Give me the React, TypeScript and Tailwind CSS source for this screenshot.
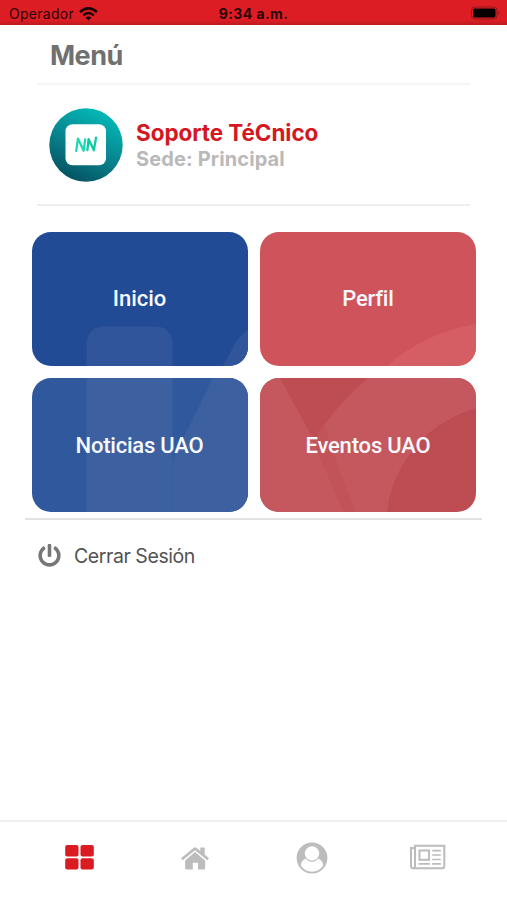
import React from "react";
import { FaPowerOff } from "react-icons/fa";

const TILE_TEXT = "relative top-[0.5px] font-['Roboto',sans-serif] font-medium text-[22px] leading-none text-[#f7f8fc]";

const tiles = [
  {
    label: "Inicio",
    bg: "bg-[#224b95]",
    tracking: "tracking-[0em]",
    art: (
      <g fill="#30559a">
        <path d="M54.5 134V109Q57 97 69 94.5H127Q138 97 140.5 109V134Z" />
        <path d="M191 134L204 110Q209 102 216 98V134Z" />
      </g>
    ),
  },
  {
    label: "Perfil",
    bg: "bg-[#cf535b]",
    tracking: "tracking-[-0.01em]",
    art: <path d="M127 134Q164 101 216 92V134Z" fill="#d45e64" />,
  },
  {
    label: "Noticias UAO",
    bg: "bg-[#30589c]",
    tracking: "tracking-[-0.01em]",
    art: (
      <g fill="#3d61a0">
        <rect x="54.5" width="86" height="134" />
        <path d="M181 0H216V134H140.500V82Z" />
      </g>
    ),
  },
  {
    label: "Eventos UAO",
    bg: "bg-[#be4c53]",
    tracking: "tracking-[-0.008em]",
    art: (
      <g>
        <path d="M0 0H20L50 55L84 134H0Z" fill="#c4585e" />
        <path d="M108 0H216V30Q190 38 170 54Q132 88 127 134H84L54 62Q76 27 108 0Z" fill="#c4585e" />
        <path d="M50 55L84 134H96Q80 96 64 46L56 59Z" fill="#c15359" />
      </g>
    ),
  },
];

function StatusBar() {
  return (
    <div className="flex h-[25px] items-center justify-between bg-gradient-to-b from-[#dc1e24] from-80% to-[#bd1b20] text-[#2b0506]">
      <div className="flex w-[160px] items-center gap-[5px] pl-[9px] pt-[3px]">
        <span className="text-[14px] leading-none tracking-[0.02em]">Operador</span>
        <svg className="h-[14px] w-[19px]" viewBox="0 0 19 14" fill="none" stroke="#180203">
          <path d="M1 5.100Q9.500-2.300 18 5.100" strokeWidth="2.600" />
          <path d="M4.200 8.400Q9.500 3.800 14.800 8.400" strokeWidth="2.400" />
          <path d="M9.500 13.500L6.600 10.600Q9.500 8.200 12.400 10.600Z" fill="#180203" stroke="none" />
        </svg>
      </div>
      <span className="pt-[3px] text-[14px] font-bold leading-none tracking-[0.03em]">9:34 a.m.</span>
      <div className="flex w-[160px] justify-end pr-[6px] pt-[1px]">
        <svg width="31" height="14" viewBox="0 0 31 14">
          <rect x="1.500" y="1" width="25.500" height="12" rx="3.500" fill="none" stroke="#8e171b" />
          <rect x="3" y="2.500" width="22.500" height="9" rx="1.800" fill="#080000" />
          <path d="M28.500 5.200Q30.800 7 28.500 8.800Z" fill="#8e171b" />
        </svg>
      </div>
    </div>
  );
}

function Avatar() {
  return (
    <svg className="h-[74px] w-[74px] shrink-0" viewBox="0 0 74 74">
      <defs>
        <linearGradient id="ring" x1="0.75" y1="0.05" x2="0.3" y2="1">
          <stop offset="0" stopColor="#04b9b7" />
          <stop offset="0.5" stopColor="#078690" />
          <stop offset="1" stopColor="#06505f" />
        </linearGradient>
      </defs>
      <circle cx="37" cy="37" r="36.700" fill="url(#ring)" />
      <rect x="16.500" y="16.300" width="40.500" height="41" rx="7" fill="#fff" />
      <g fill="none" strokeWidth="2.300" strokeLinecap="round" strokeLinejoin="round">
        <path d="M27.200 42.800L29 30.600L34.600 42.800L36.200 31.400" stroke="#1fd8b4" />
        <path d="M38.400 42L39.600 31.200L44.900 42.300L47 29.600" stroke="#12c9a6" />
      </g>
    </svg>
  );
}

function TabBar() {
  return (
    <nav className="grid h-[80px] grid-cols-4 border-t-2 border-[#efefef] px-[21px] text-[#bcbcbc]">
      <div className="flex justify-center pt-[22px]">
        <svg width="29" height="27" viewBox="0 0 29 27" fill="#db1b22">
          <rect x="0.200" y="1" width="13.300" height="11.400" rx="2" />
          <rect x="15.500" y="1" width="13.300" height="11.400" rx="2" />
          <rect x="0.200" y="14.200" width="13.300" height="11.400" rx="2" />
          <rect x="15.500" y="14.200" width="13.300" height="11.400" rx="2" />
        </svg>
      </div>
      <div className="flex justify-center pt-[25px]">
        <svg width="28" height="24" viewBox="0 0 28 24" fill="currentColor">
          <path d="M14 5L24.200 13.500V21Q24.200 22.600 22.600 22.600H17V15.800H11.800V22.600H5.700Q4.100 22.600 4.100 21V13.500Z" />
          <path d="M12.500 0.900Q14-0.300 15.500 0.900L19.300 4V0.500H23.700V7.600L28 11.200L26.300 13.200L14 3.300L1.700 13.200L0 11.200Z" />
        </svg>
      </div>
      <div className="flex justify-center pt-[20px]">
        <svg width="32" height="32" viewBox="0 0 32 32">
          <circle cx="16" cy="16" r="15.400" fill="#bcbcbc" />
          <path d="M4.700 23.500Q5.800 17.600 9.800 16.800Q16 23.400 22.200 16.800Q26.200 17.600 27.300 23.500Q23 29.700 16 29.700Q9 29.700 4.700 23.500Z" fill="#fff" />
          <circle cx="16" cy="11.500" r="7.200" fill="#fff" />
        </svg>
      </div>
      <div className="flex justify-center pt-[22px]">
        <svg width="36" height="26" viewBox="0 0 36 26" fill="none" stroke="currentColor" strokeWidth="2">
          <g transform="translate(-0.5 0.5)">
            <path d="M5.500 3.500H1.500V21.500Q1.500 23.700 3.500 23.700H32.700Q34.800 23.700 34.800 21.500V1.200H5.500V21.500Q5.500 23.700 3.500 23.700" />
            <rect x="10" y="6" width="9.500" height="9.300" />
            <path d="M9 19.300H20.500M22.700 6.200H31.300M22.700 10.500H31.300M22.700 15H31.300M22.700 19.300H31.300" strokeWidth="1.700" />
          </g>
        </svg>
      </div>
    </nav>
  );
}

export default function App() {
  return (
    <div className="flex h-[900px] w-[507px] flex-col overflow-hidden bg-white font-['Inter',sans-serif]">
      <StatusBar />

      <main className="flex flex-1 flex-col">
        <header className="mx-[37px] flex h-[60px] items-center border-b-2 border-[#f5f5f5] pl-[13px] pt-[3px]">
          <h1 className="text-[27px] font-bold leading-none tracking-[-0.02em] text-[#707070]">Menú</h1>
        </header>

        <section className="mx-[37px] flex h-[121px] items-center border-b-2 border-[#eeeeee] pl-[12px]">
          <Avatar />
          <div className="ml-[13px] pt-[2px]">
            <p className="whitespace-nowrap text-[22.500px] font-bold leading-[27px] tracking-[-0.003em] text-[#d4181f]">Soporte TéCnico</p>
            <p className="whitespace-nowrap text-[20px] font-bold leading-[27px] tracking-[0.006em] text-[#b9b9b9]">Sede: Principal</p>
          </div>
        </section>

        <section className="mx-[25px] grid grid-cols-[216px_216px] gap-x-[12.500px] gap-y-[12.500px] border-b-2 border-[#e2e2e2] pb-[5.500px] pl-[6.500px] pt-[25.500px]">
          {tiles.map((t) => (
            <button key={t.label} className={`relative flex h-[134px] items-center justify-center overflow-hidden rounded-[19px] ${t.bg}`}>
              <svg className="absolute inset-0 h-full w-full" viewBox="0 0 216 134">{t.art}</svg>
              <span className={`${TILE_TEXT} ${t.tracking}`}>{t.label}</span>
            </button>
          ))}
        </section>

        <button className="mt-[24px] flex items-center pl-[38px]">
          <FaPowerOff className="h-[23px] w-[23px] text-[#777777]" />
          <span className="ml-[13px] text-[19.500px] leading-[24px] tracking-[-0.022em] text-[#525252]">Cerrar Sesión</span>
        </button>
      </main>

      <TabBar />
    </div>
  );
}
